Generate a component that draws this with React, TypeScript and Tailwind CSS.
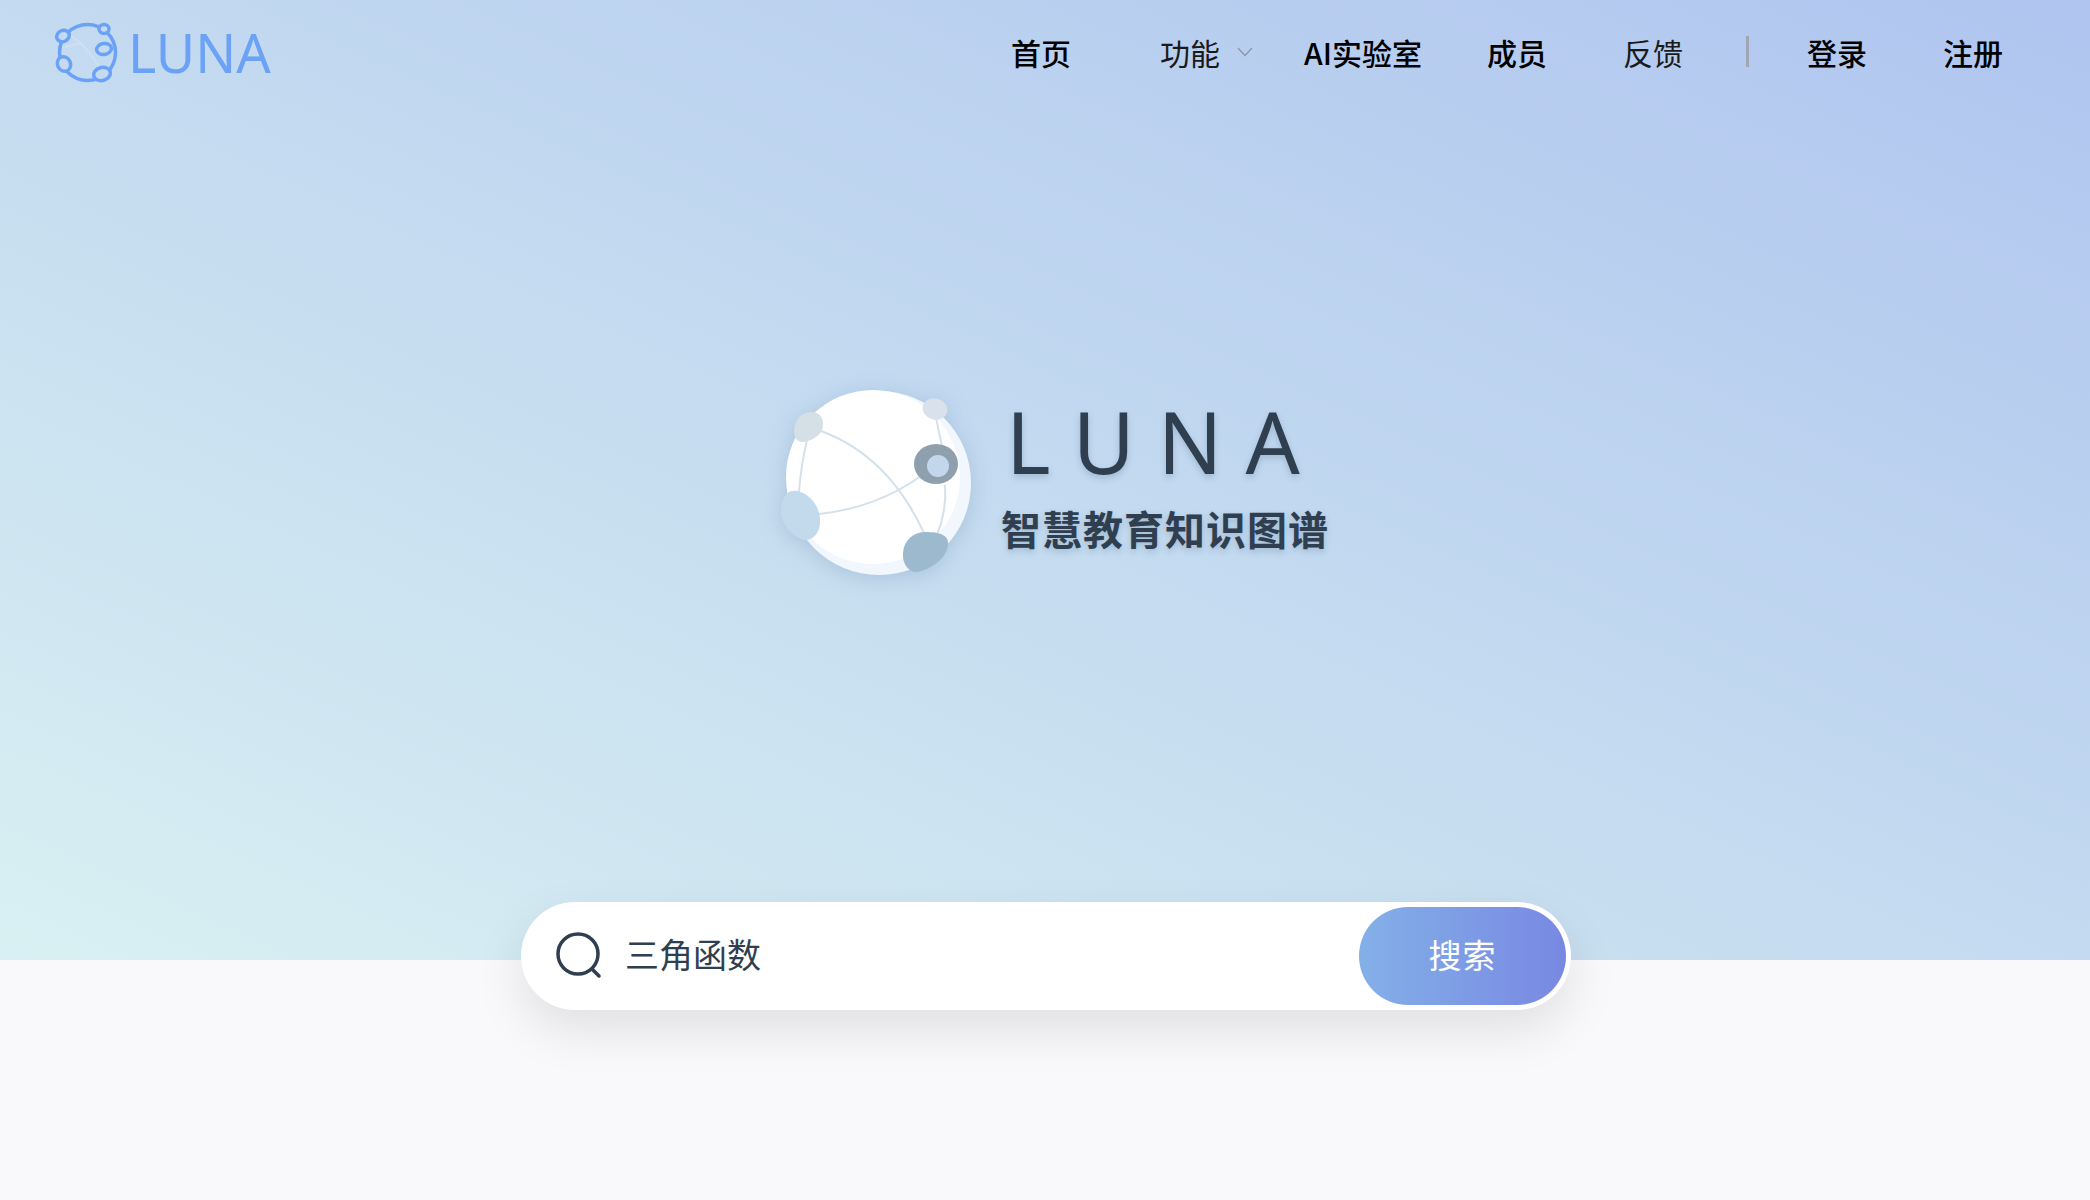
const cjk = "font-['Noto_Sans_CJK_SC','Noto_Sans',sans-serif]";

const SmallLogo = () => (
  <svg viewBox="0 0 70 70" className="w-[70px] h-[70px] shrink-0">
    <path d="M12 28 L28 24 L38 36 M16 16 L28 24 M38 36 L46 48" fill="none" stroke="#cfe0f3" strokeWidth="2" />
    <circle cx="34.5" cy="33.5" r="28" fill="none" stroke="#6ba2f5" strokeWidth="3.5" />
    <ellipse cx="10" cy="17" rx="6.5" ry="5.5" transform="rotate(-25 10 17)" fill="#c3daf1" stroke="#6ba2f5" strokeWidth="3.5" />
    <ellipse cx="51" cy="10" rx="5" ry="4.5" fill="#c3daf1" stroke="#6ba2f5" strokeWidth="3.5" />
    <ellipse cx="51" cy="30" rx="7.5" ry="5.5" transform="rotate(-10 51 30)" fill="#c3daf1" stroke="#6ba2f5" strokeWidth="3.5" />
    <ellipse cx="11" cy="45" rx="6.5" ry="7.5" transform="rotate(-25 11 45)" fill="#c3daf1" stroke="#6ba2f5" strokeWidth="3.5" />
    <ellipse cx="49" cy="55" rx="8.5" ry="6.5" transform="rotate(-15 49 55)" fill="#c3daf1" stroke="#6ba2f5" strokeWidth="3.5" />
  </svg>
);

const BigLogo = () => (
  <svg viewBox="0 0 230 220" className="w-[230px] h-[220px] shrink-0 drop-shadow-[0_4px_10px_rgba(90,120,160,0.25)]">
    <circle cx="118" cy="113" r="92" fill="#f1f7fd" />
    <circle cx="112" cy="107" r="87" fill="#ffffff" />
    <g fill="none" stroke="#d5e1ea" strokeWidth="2">
      <path d="M60 61 Q128 86 164 165" />
      <path d="M58 144 Q115 138 160 106" />
      <path d="M46 70 Q40 95 38 122" />
      <path d="M175 48 Q178 62 181 76" />
      <path d="M184 115 Q186 140 176 165" />
    </g>
    <path d="M33 60 C34 48 42 41 52 42 C60 43 64 50 61 60 C58 67 48 72 41 72 C35 72 33 66 33 60Z" fill="#d4dfe6" />
    <ellipse cx="174" cy="39" rx="12.5" ry="10.5" transform="rotate(15 174 39)" fill="#d9e1ed" />
    <ellipse cx="175" cy="94" rx="22" ry="20" fill="#8e9fae" />
    <circle cx="177" cy="96" r="11" fill="#c3d7ec" />
    <path d="M20 140 C20 126 28 119 36 121 C50 124 60 138 59 152 C59 163 52 170 44 170 C32 168 20 155 20 140Z" fill="#c3daed" />
    <path d="M142 183 C143 170 152 162 165 162 C178 162 188 165 187 174 C186 188 172 198 157 202 C148 203 141 194 142 183Z" fill="#9db9cd" />
  </svg>
);

export default function App() {
  return (
    <div className={`w-full min-h-[1200px] bg-[#f9f9fb] ${cjk}`}>
      <div className="h-[960px] bg-linear-to-tr from-[#d9f0f3] via-[#c3daf0] to-[#b0c5ef]">
        <header className="h-[108px] flex items-center justify-between pl-[53px] pr-[87px]">
          <div className="flex items-center gap-[5px]">
            <SmallLogo />
            <span className="font-['Noto_Sans',sans-serif] mb-[5px] text-[54px] leading-none text-[#6ba2f5]">LUNA</span>
          </div>
          <nav className="flex items-center pb-[4px] text-[30px] leading-none text-black">
            <a className="font-medium">首页</a>
            <a className="ml-[89px] text-[#1a1a1a]">功能</a>
            <svg viewBox="0 0 16 10" className="ml-[17px] w-[16px] h-[10px]" fill="none" stroke="#8b94a3" strokeWidth="1.2">
              <path d="M1 1 L8 8.5 L15 1" />
            </svg>
            <a className="ml-[51px] font-medium">AI实验室</a>
            <a className="ml-[65px] font-medium">成员</a>
            <a className="ml-[76px] text-[#1a1a1a]">反馈</a>
            <span className="ml-[63px] w-[3px] h-[31px] bg-[#9fa6b4] -translate-y-[1px]" />
            <a className="ml-[58px] font-medium">登录</a>
            <a className="ml-[76px] font-medium">注册</a>
          </nav>
        </header>
        <div className="mt-[262px] flex justify-center">
          <BigLogo />
          <div className="ml-[10px] flex flex-col items-start text-[#2f3f50] [text-shadow:0_3px_6px_rgba(60,90,120,0.25)]">
            <span className="font-['Noto_Sans',sans-serif] mt-[25px] ml-[5px] text-[85px] leading-[92px] tracking-[23px]">LUNA</span>
            <span className="mt-[15px] text-[40px] leading-[52px] font-semibold tracking-[1px]">智慧教育知识图谱</span>
          </div>
        </div>
      </div>
      <div className="-mt-[58px] flex justify-center pl-[2px]">
        <div className="w-[1050px] h-[108px] rounded-full bg-white shadow-[0_20px_50px_rgba(0,0,0,0.1)] flex items-center pl-[35px] pr-[5px]">
          <svg viewBox="0 0 48 48" className="w-[48px] h-[48px] shrink-0" fill="none" stroke="#2f3f50" strokeWidth="3.5" strokeLinecap="round">
            <circle cx="22" cy="22" r="20" />
            <path d="M36 37 L43 44" />
          </svg>
          <span className="ml-[21px] flex-1 pb-[5px] text-[34px] leading-none text-[#2f3f50]">三角函数</span>
          <button className="w-[207px] h-[98px] pb-[2px] rounded-full bg-linear-to-r from-[#84b0e8] to-[#7888e2] text-white text-[33px] tracking-[1px]">
            搜索
          </button>
        </div>
      </div>
    </div>
  );
}
